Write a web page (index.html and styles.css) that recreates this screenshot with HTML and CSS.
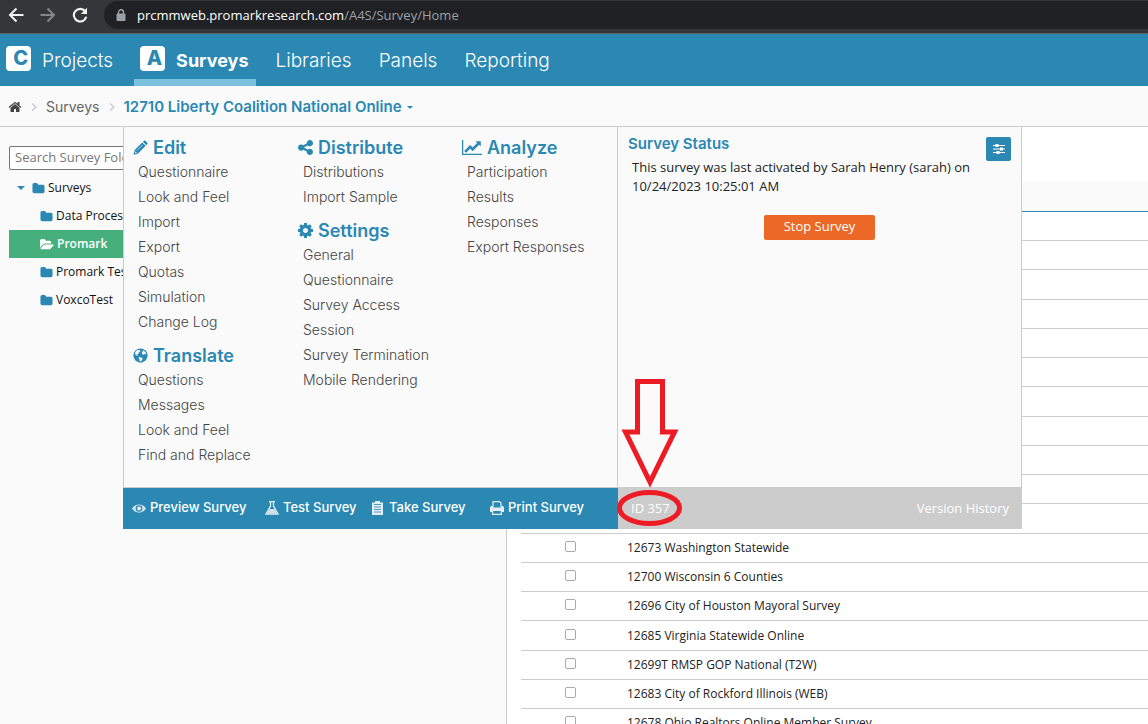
FILE: index.html
```html
<!DOCTYPE html>
<html lang="en">
<head>
<meta charset="utf-8">
<title>Surveys</title>
<link rel="stylesheet" href="styles.css">
</head>
<body>
<svg class="defs" aria-hidden="true">
  <symbol id="folder" viewBox="0 0 1792 1792"><path d="M1728 608v704q0 92-66 158t-158 66h-1216q-92 0-158-66t-66-158v-960q0-92 66-158t158-66h320q92 0 158 66t66 158v32h672q92 0 158 66t66 158z"/></symbol>
  <symbol id="chevron" viewBox="0 0 6 8"><path d="M1 0.500l4 3.500-4 3.500" fill="none" stroke="#c8c8c8" stroke-width="1.300"/></symbol>
</svg>

<header class="browser">
  <button class="browser-btn" aria-label="Back"><svg viewBox="0 0 16 16" fill="none" stroke="#f1f1f1" stroke-width="2"><path d="M15.500 8H2M8.500 1.500L2 8l6.500 6.500"/></svg></button>
  <button class="browser-btn" aria-label="Forward"><svg viewBox="0 0 16 16" fill="none" stroke="#85868a" stroke-width="2"><path d="M.5 8H14M7.500 1.500L14 8l-6.500 6.500"/></svg></button>
  <button class="browser-btn" aria-label="Reload"><svg viewBox="0 0 16 16"><path d="M13.200 4.300A6.300 6.300 0 1 0 14.300 9.800" fill="none" stroke="#f1f1f1" stroke-width="2.200"/><path d="M15 .8V7H8.800z" fill="#f1f1f1"/></svg></button>
  <div class="omnibox">
    <svg class="lock" viewBox="0 0 10 12"><rect x="0.500" y="4.500" width="9" height="7.500" rx="1" fill="#9aa0a6"/><path d="M2.500 5V3.200a2.500 2.500 0 0 1 5 0V5" fill="none" stroke="#9aa0a6" stroke-width="1.400"/></svg>
    <span class="url"><b>prcmmweb.promarkresearch.com</b>/A4S/Survey/Home</span>
  </div>
</header>

<nav class="nav">
  <a class="nav-link" href="#"><span class="logo">C</span>Projects</a>
  <a class="nav-link nav-active" href="#"><span class="logo">A</span>Surveys</a>
  <a class="nav-link" href="#">Libraries</a>
  <a class="nav-link" href="#">Panels</a>
  <a class="nav-link" href="#">Reporting</a>
</nav>

<div class="crumbs">
  <a href="#" aria-label="Home"><svg class="home" viewBox="0 0 1792 1792"><path d="M1472 992v480q0 26-19 45t-45 19h-384v-384h-256v384h-384q-26 0-45-19t-19-45v-480q0-1 .5-3t.5-3l575-474 575 474q1 2 1 6zm223-69l-62 74q-8 9-21 11h-3q-13 0-21-7l-692-577-692 577q-12 8-24 7-13-2-21-11l-62-74q-8-10-7-23.500t11-21.500l719-599q32-26 76-26t76 26l244 204v-195q0-14 9-23t23-9h192q14 0 23 9t9 23v408l219 182q10 8 11 21.500t-7 23.500z"/></svg></a>
  <svg class="chev"><use href="#chevron"/></svg>
  <a class="crumb" href="#">Surveys</a>
  <svg class="chev"><use href="#chevron"/></svg>
  <a class="crumb-current" href="#">12710 Liberty Coalition National Online<span class="caret"></span></a>
</div>

<div class="workspace">
  <aside class="sidebar">
    <input class="search" type="text" placeholder="Search Survey Folders" aria-label="Search Survey Folders">
    <ul class="tree">
      <li class="root"><span class="twisty"></span><svg><use href="#folder"/></svg>Surveys</li>
      <li><svg><use href="#folder"/></svg>Data Processing</li>
      <li class="selected"><svg class="open" viewBox="0 0 1920 1792"><path d="M1879 952q0 31-31 66l-336 396q-43 51-120.500 86.500t-143.500 35.500h-1088q-34 0-60.500-13t-26.500-43q0-31 31-66l336-396q43-51 120.500-86.500t143.500-35.500h1088q34 0 60.500 13t26.500 43zm-343-344v160h-832q-94 0-197 47.500t-164 119.500l-337 396-5 6q0-4-.5-12.500t-.5-12.500v-960q0-92 66-158t158-66h320q92 0 158 66t66 158v32h544q92 0 158 66t66 158z"/></svg>Promark</li>
      <li><svg><use href="#folder"/></svg>Promark Test</li>
      <li><svg><use href="#folder"/></svg>VoxcoTest</li>
    </ul>
  </aside>

  <main class="content">
    <table class="surveys">
      <thead><tr><th class="pick"></th><th></th></tr></thead>
      <tbody>
        <tr><td></td><td></td></tr>
        <tr><td></td><td></td></tr>
        <tr><td></td><td></td></tr>
        <tr><td></td><td></td></tr>
        <tr><td></td><td></td></tr>
        <tr><td></td><td></td></tr>
        <tr><td></td><td></td></tr>
        <tr><td></td><td></td></tr>
        <tr><td></td><td></td></tr>
        <tr><td></td><td></td></tr>
        <tr><td></td><td></td></tr>
        <tr><td><input type="checkbox" id="s1"></td><td><label for="s1">12673 Washington Statewide</label></td></tr>
        <tr><td><input type="checkbox" id="s2"></td><td><label for="s2">12700 Wisconsin 6 Counties</label></td></tr>
        <tr><td><input type="checkbox" id="s3"></td><td><label for="s3">12696 City of Houston Mayoral Survey</label></td></tr>
        <tr><td><input type="checkbox" id="s4"></td><td><label for="s4">12685 Virginia Statewide Online</label></td></tr>
        <tr><td><input type="checkbox" id="s5"></td><td><label for="s5">12699T RMSP GOP National (T2W)</label></td></tr>
        <tr><td><input type="checkbox" id="s6"></td><td><label for="s6">12683 City of Rockford Illinois (WEB)</label></td></tr>
        <tr><td><input type="checkbox" id="s7"></td><td><label for="s7">12678 Ohio Realtors Online Member Survey</label></td></tr>
      </tbody>
    </table>
  </main>

  <section class="menu">
    <div class="menu-links">
      <div class="menu-col">
        <h2><svg viewBox="0 0 16 16"><path d="M11.600.9a1.200 1.200 0 0 1 1.700 0l1.900 1.900a1.200 1.200 0 0 1 0 1.700l-1 1L10.600 1.900zM9.900 2.600l3.600 3.600-8.100 8.100L.5 15.600l1.300-4.900zM2.600 11.900l-.6 2.200 2.200-.6z" fill-rule="evenodd"/><path d="M4.300 11.200l6-6" stroke="#fafafa" stroke-width=".7"/></svg>Edit</h2>
        <a href="#">Questionnaire</a><a href="#">Look and Feel</a><a href="#">Import</a><a href="#">Export</a><a href="#">Quotas</a><a href="#">Simulation</a><a href="#">Change Log</a>
        <h2><svg viewBox="0 0 16 16"><circle cx="8" cy="8" r="7.600"/><path d="M2.500 4.200l2-2 2.800.1.800 1.200-1.700 1.100-.6 1.500-1.500.6.900 1.300-.7.500L3 7.200l-.8-.8zM10 2.600l1.600.3 1.900 1.900.7 2-1.500-.8-1.300 1.200-1.500-.6-.6-1.500 1.100-.8zM6.400 9.600l2.400.4 1.600 1.400-.9 1.600-1.600 1.500-.8-.5-.2-2.200-1-1z" fill="#fafafa"/></svg>Translate</h2>
        <a href="#">Questions</a><a href="#">Messages</a><a href="#">Look and Feel</a><a href="#">Find and Replace</a>
      </div>
      <div class="menu-col">
        <h2><svg viewBox="128 128 1536 1536"><path d="M1344 1024q133 0 226.500 93.500t93.500 226.500-93.500 226.500-226.500 93.500-226.500-93.500-93.500-226.500q0-12 2-34l-360-180q-92 86-218 86-133 0-226.500-93.500t-93.500-226.500 93.500-226.500 226.500-93.500q126 0 218 86l360-180q-2-22-2-34 0-133 93.500-226.500t226.500-93.500 226.500 93.500 93.500 226.500-93.500 226.500-226.500 93.500q-126 0-218-86l-360 180q2 22 2 34t-2 34l360 180q92-86 218-86z"/></svg>Distribute</h2>
        <a href="#">Distributions</a><a href="#">Import Sample</a>
        <h2><svg viewBox="128 128 1536 1536"><path d="M1152 896q0-106-75-181t-181-75-181 75-75 181 75 181 181 75 181-75 75-181zm512-109v222q0 12-8 23t-20 13l-185 28q-19 54-39 91 35 50 107 138 10 12 10 25t-9 23q-27 37-99 108t-94 71q-12 0-26-9l-138-108q-44 23-91 38-16 136-29 186-7 28-36 28h-222q-14 0-24.500-8.500t-11.500-21.500l-28-184q-49-16-90-37l-141 107q-10 9-25 9-14 0-25-11-126-114-165-168-7-10-7-23 0-12 8-23 15-21 51-66.500t54-70.500q-27-50-41-99l-183-27q-13-2-21-12.500t-8-23.500v-222q0-12 8-23t19-13l186-28q14-46 39-92-40-57-107-138-10-12-10-24 0-10 9-23 26-36 98.500-107.500t94.500-71.500q13 0 26 10l138 107q44-23 91-38 16-136 29-186 7-28 36-28h222q14 0 24.500 8.500t11.500 21.500l28 184q49 16 90 37l142-107q9-9 24-9 13 0 25 10 129 119 165 170 7 8 7 22 0 12-8 23-15 21-51 66.500t-54 70.500q26 50 41 98l183 28q13 2 21 12.500t8 23.500z"/></svg>Settings</h2>
        <a href="#">General</a><a href="#">Questionnaire</a><a href="#">Survey Access</a><a href="#">Session</a><a href="#">Survey Termination</a><a href="#">Mobile Rendering</a>
      </div>
      <div class="menu-col">
        <h2><svg class="wide" viewBox="-128 128 2048 1536"><path d="M1920 1536v128h-2048v-1536h128v1408h1920zm-128-1248v435q0 21-19.500 29.500t-35.500-7.500l-121-121-633 633q-10 10-23 10t-23-10l-233-233-416 416-192-192 585-585q10-10 23-10t23 10l233 233 464-464-121-121q-16-16-7.500-35.500t29.500-19.500h435q14 0 23 9t9 23z"/></svg>Analyze</h2>
        <a href="#">Participation</a><a href="#">Results</a><a href="#">Responses</a><a href="#">Export Responses</a>
      </div>
    </div>

    <div class="status">
      <div class="status-head">
        <h3>Survey Status</h3>
        <button class="tune" aria-label="Status options"><svg viewBox="0 0 12 12"><path d="M0 2.500h12M0 6h12M0 9.500h12" stroke="#fff" stroke-width="1.200"/><path d="M2.500 1h3v3h-3zM7 4.500h3v3H7zM3.500 8h3v3h-3z" fill="#fff"/></svg></button>
      </div>
      <p>This survey was last activated by Sarah Henry (sarah) on 10/24/2023 10:25:01 AM</p>
      <button class="stop">Stop Survey</button>
    </div>

    <div class="actions">
      <a href="#"><svg viewBox="0 0 14 14"><path d="M0 7.500C3 2 11 2 14 7.500 11 13 3 13 0 7.500z" fill="#d4e5ee"/><circle cx="7" cy="7.500" r="3.300" fill="#2a88b3"/><circle cx="7" cy="7.500" r="2" fill="#e3eef4"/></svg>Preview Survey</a>
      <a href="#"><svg viewBox="0 0 14 14"><path d="M4 .5h6M5.500 .5V5L1 13h12L8.500 5V.5" fill="none" stroke="#e3eef4" stroke-width="1.300"/><path d="M4.500 8h5l2.500 4.500H2z" fill="#cfe2ec"/></svg>Test Survey</a>
      <a href="#"><svg class="slim" viewBox="0 0 11 14"><path d="M0 1.500h3V0h5v1.500h3V14H0z" fill="#e3eef4"/><path d="M2 3.500h7M2 6h7M2 8.500h7M2 11h7" stroke="#2a88b3" stroke-width=".8"/></svg>Take Survey</a>
      <a href="#"><svg viewBox="0 0 14 14"><path d="M3 6V.6h6.500L11 2v4" fill="none" stroke="#e3eef4" stroke-width="1.200"/><path d="M0 6.500Q0 5 1.500 5H3v1.500h8V5h1.500Q14 5 14 6.500V11h-2V9H2v2H0z" fill="#e3eef4"/><path d="M2.600 9.500h8.800v3.900H2.600z" fill="none" stroke="#e3eef4" stroke-width="1.200"/></svg>Print Survey</a>
    </div>
    <div class="meta"><span>ID 357</span><a href="#">Version History</a></div>

    <svg class="marker" viewBox="0 0 70 154" fill="none" stroke="#ed1c24" stroke-width="5"><path d="M22.500 7.500h25V58H59.500L35 108 10.500 58h12z"/><ellipse cx="34.500" cy="134" rx="30" ry="15.500"/></svg>
  </section>
</div>
</body>
</html>
```
FILE: styles.css
```css
* { box-sizing: border-box; }
html, body { height: 100%; }
body {
  margin: 0;
  display: flex;
  flex-direction: column;
  overflow: hidden;
  background: #fff;
  color: #222;
  font: 12px/16px "Open Sans", sans-serif;
}
a { color: inherit; text-decoration: none; }
button { border: 0; padding: 0; font: inherit; cursor: pointer; }
.defs { display: none; }

.browser {
  flex: none;
  display: flex;
  align-items: center;
  height: 34px;
  padding: 0 0 3px 8px;
  background: #35363a;
  border-bottom: 1px solid #5c6166;
}
.browser-btn { width: 16px; height: 16px; margin-right: 16px; background: none; }
.browser-btn svg { display: block; width: 16px; height: 16px; }
.omnibox {
  flex: 1;
  display: flex;
  align-items: center;
  gap: 11px;
  height: 28px;
  padding-left: 12px;
  background: #202124;
  border-radius: 14px 0 0 14px;
}
.lock { width: 10px; height: 12px; }
.url { color: #9aa0a6; font-size: 13px; }
.url b { color: #fff; font-weight: 400; }

.nav {
  flex: none;
  display: flex;
  gap: 27px;
  height: 52px;
  padding-left: 6px;
  background: #2a88b3;
  color: #fff;
  font: 300 19px/54px Inter, sans-serif;
}
.nav-link { display: flex; gap: 11px; }
.nav-active {
  margin: 0 -8px 0 -6px;
  padding: 0 8px 0 6px;
  border-bottom: 7px solid #7cc2df;
  font-size: 18px;
  font-weight: 700;
}
.logo {
  width: 25px;
  height: 25px;
  margin-top: 12px;
  padding-right: 3px;
  border-radius: 4px;
  background: #fff;
  color: #2a88b3;
  font: 800 20px/25px Inter, sans-serif;
  text-align: right;
}

.crumbs {
  flex: none;
  display: flex;
  align-items: center;
  gap: 9px;
  height: 41px;
  padding: 2px 0 0 8px;
  background: #fafafa;
  border-bottom: 1px solid #ccc;
  color: #666;
  font: 15px/20px Inter, sans-serif;
}
.crumb { font-size: 14px; }
.home { display: block; width: 14px; height: 14px; fill: #444; }
.chev { width: 6px; height: 8px; }
.crumb-current { display: flex; align-items: center; gap: 5px; color: #2a88b3; font-weight: 600; }
.caret { border: 3px solid transparent; border-top-color: #2a88b3; border-bottom: 0; }

.workspace { position: relative; flex: 1; min-height: 0; display: flex; }
.sidebar {
  flex: none;
  width: 507px;
  padding: 19px 9px 0;
  background: #fafafa;
  border-right: 1px solid #ccc;
}
.search {
  display: block;
  width: 100%;
  height: 24px;
  padding: 0 5px 2px;
  border: 1px solid #767676;
  border-radius: 2px;
  background: #fff;
  font: 13px/20px "Open Sans", sans-serif;
}
.search::placeholder { color: #777; opacity: 1; }
.tree { margin: 4px 0 0; padding: 0; list-style: none; color: #111; }
.tree li { display: flex; align-items: center; gap: 3px; height: 28px; padding-left: 31px; }
.tree .root { padding-left: 8px; }
.tree svg { width: 13px; height: 13px; fill: #2a88b3; }
.tree .selected { background: #45b07c; color: #fff; font-weight: 600; }
.tree .open { width: 14px; fill: #fff; }
.twisty { margin-right: 4px; border: 4px solid transparent; border-top-color: #2a88b3; border-bottom: 0; }

.content { flex: 1; padding: 55px 0 0 14px; overflow: hidden; }
.surveys { width: 100%; border-collapse: separate; border-spacing: 0; table-layout: fixed; color: #222; }
.surveys th { height: 30px; padding: 0; background: #fafafa; border-bottom: 1px solid #2a88b3; }
.pick { width: 106px; }
.surveys td { height: 29px; padding: 0; border-bottom: 1px solid #ccc; }
.surveys tr:nth-child(4n+3) td { height: 30px; }
.surveys td:first-child { padding-left: 44px; }
.surveys input {
  appearance: none;
  display: block;
  width: 11px;
  height: 11px;
  margin: 0 0 3px;
  border: 1px solid #aaa;
  border-radius: 2px;
  background: #fff;
}

.menu {
  position: absolute;
  top: -1px;
  left: 123px;
  display: grid;
  grid-template: 362px 41px / 495px 404px;
  background: #fafafa;
}
.menu-links, .status { border: 1px solid #ccc; }
.menu-links {
  display: grid;
  grid-template-columns: 165px 164px auto;
  padding: 9px 0 0 9px;
  color: #444;
  font: 300 14px/25px Inter, sans-serif;
}
.menu-col h2 {
  display: flex;
  align-items: center;
  gap: 5px;
  margin: 10px 0 0;
  color: #2a88b3;
  font: 600 18px/23px Inter, sans-serif;
}
.menu-col h2:first-child { margin-top: 0; }
.menu-col h2 svg { width: 15px; height: 15px; fill: #2a88b3; }
.menu-col h2 .wide { width: 20px; }
.menu-col a { display: block; padding-left: 5px; }
.status { border-left: 0; padding: 8px 10px; }
.status-head { display: flex; justify-content: space-between; height: 23px; }
.status h3 { margin: 0; color: #2a88b3; font: 600 15px/18px Inter, sans-serif; }
.tune { width: 25px; height: 24px; margin-top: 2px; border-radius: 2px; background: #2a88b3; }
.tune svg { display: block; width: 12px; height: 12px; margin: auto; }
.status p { width: 345px; margin: 0 0 0 4px; font-size: 13px; line-height: 19px; }
.stop {
  display: block;
  width: 111px;
  height: 25px;
  margin: 19px auto 0;
  padding-bottom: 3px;
  border-radius: 2px;
  background: #eb6826;
  color: #fff;
  font-size: 13px;
}
.actions {
  display: grid;
  grid-template-columns: 133px 107px 118px auto;
  padding: 0 0 4px 9px;
  background: #2a88b3;
  color: #fff;
  font: 500 13px/20px Inter, sans-serif;
}
.actions a { display: flex; align-items: center; gap: 4px; }
.actions svg { width: 14px; height: 14px; margin-top: 3px; }
.actions .slim { width: 11px; margin-right: 2px; }
.meta {
  display: flex;
  align-items: center;
  justify-content: space-between;
  padding: 0 13px 2px;
  background: #ccc;
  color: #fff;
  font-size: 13px;
}
.marker { position: absolute; left: 492px; top: 248px; width: 70px; height: 154px; }
```
